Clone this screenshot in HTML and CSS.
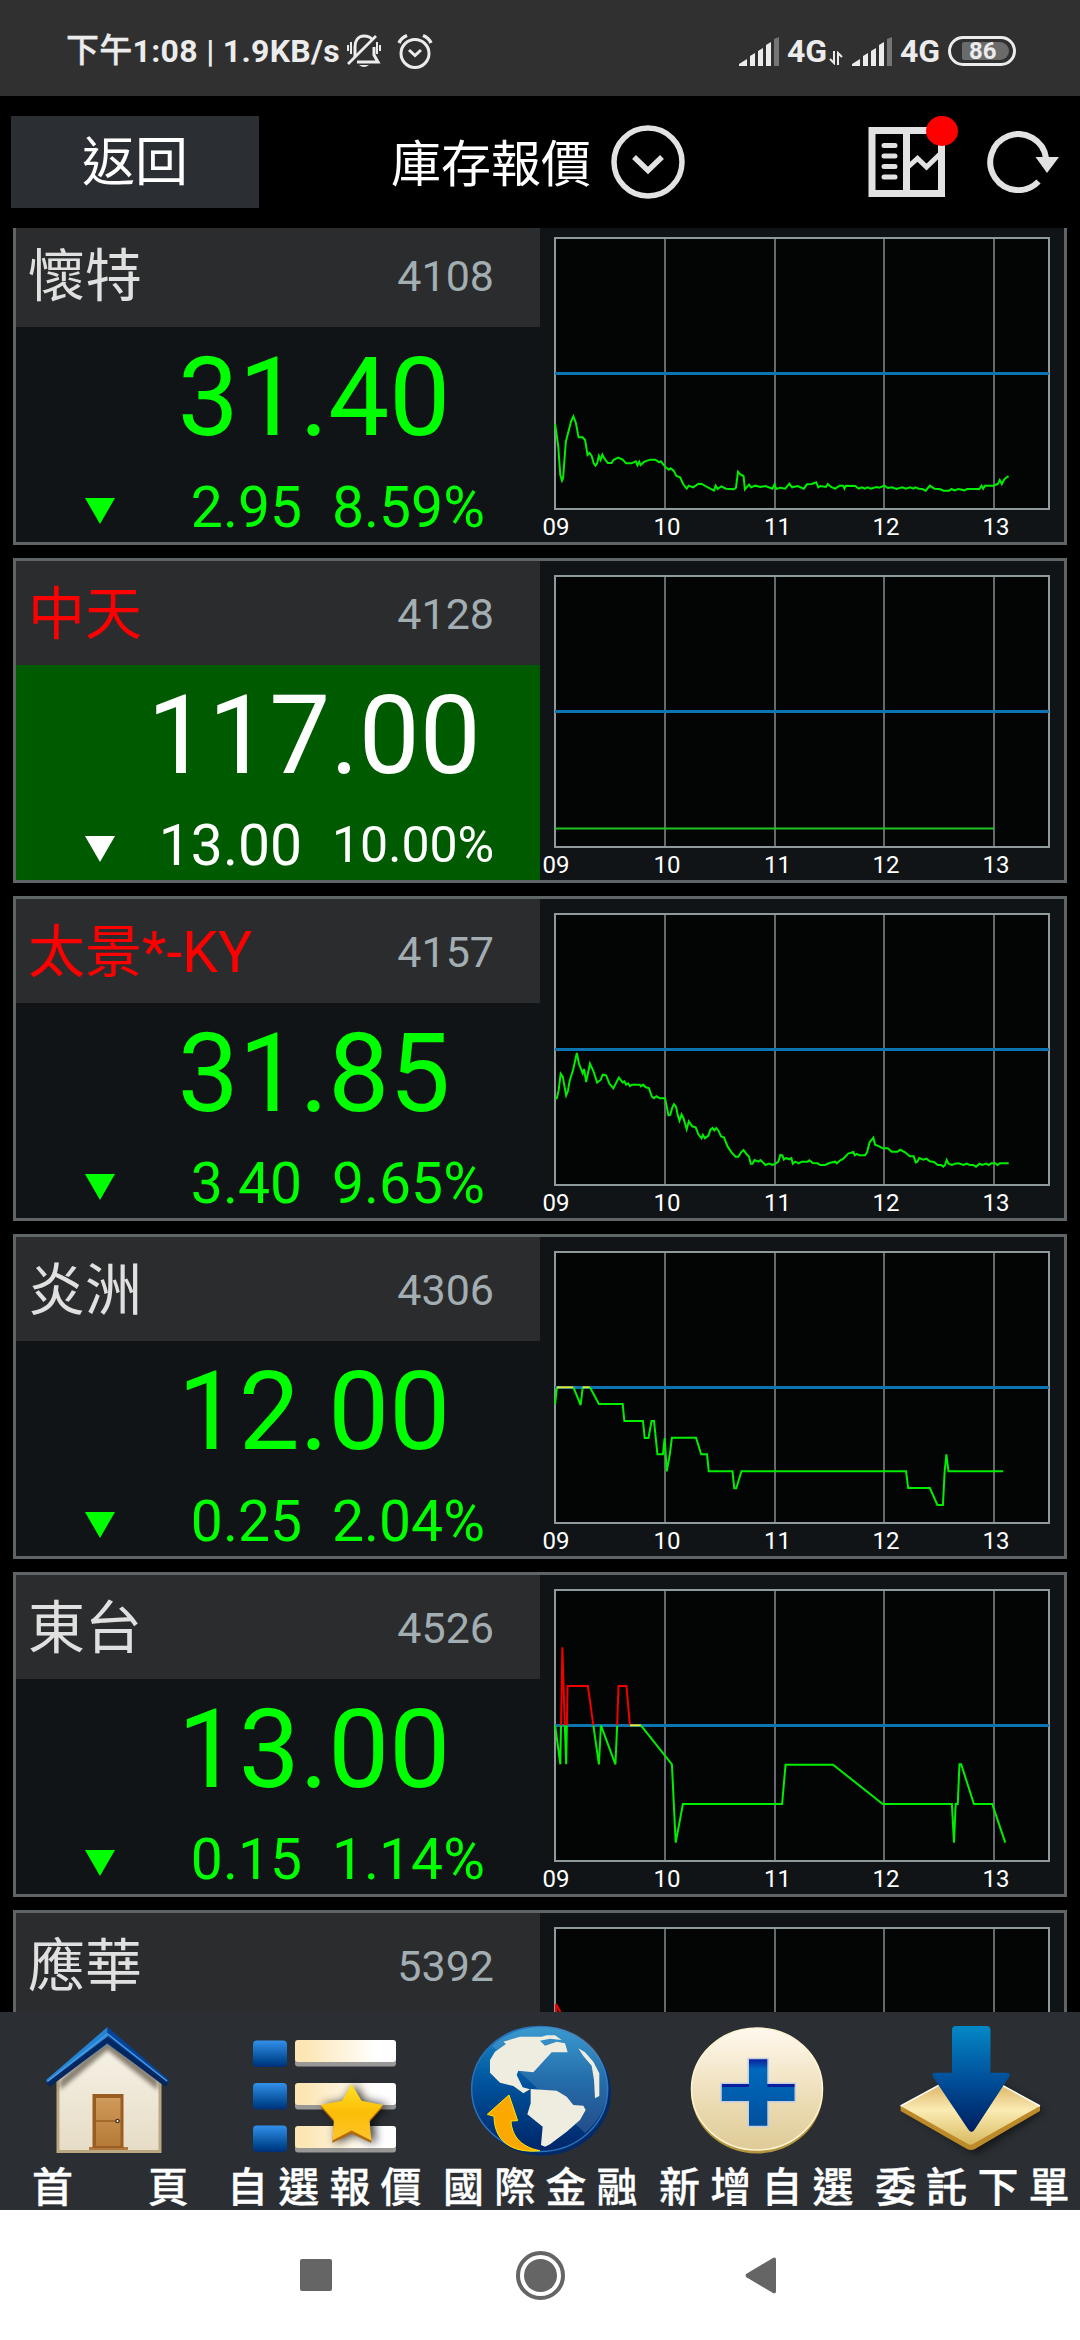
FILE: index.html
```html
<!DOCTYPE html>
<html lang="zh-Hant">
  <head>
    <meta charset="UTF-8" />
    <meta name="viewport" content="width=device-width, initial-scale=1.0" />
    <title>庫存報價</title>
    <link rel="stylesheet" href="styles.css">
  </head>
  <body>
    <!-- shared shapes -->
    <svg class="defs" width="0" height="0">
      <defs>
        <g id="grid">
          <rect x="15" y="15" width="494" height="271" fill="#030504"/>
          <path d="M125 15V286M235 15V286M344 15V286M454 15V286" stroke="#646a6c" stroke-width="2"/>
          <rect x="15" y="15" width="494" height="271" fill="none" stroke="#8f9a9c" stroke-width="2"/>
          <path d="M15 150.5H509" stroke="#0c74b0" stroke-width="3"/>
        </g>
        <g id="hours" class="hours">
          <text x="16" y="312">09</text>
          <text x="127" y="312">10</text>
          <text x="237.500" y="312">11</text>
          <text x="346" y="312">12</text>
          <text x="456" y="312">13</text>
        </g>
        <g id="signal">
          <path d="M0 29V27L8 22V29Z M11 29V19L16 16V29Z M19 29V14L24 11V29Z M27 29V8L32 5V29Z" fill="#ececec"/>
          <path d="M35 29V2L40 0V29Z" fill="#757575"/>
        </g>
        <linearGradient id="blue" x1="0" y1="0" x2="0" y2="1">
          <stop offset="0" stop-color="#3290ea"/>
          <stop offset=".8" stop-color="#00468f"/>
          <stop offset="1" stop-color="#002f78"/>
        </linearGradient>
        <linearGradient id="bar" x1="0" y1="0" x2="1" y2="0">
          <stop offset=".1" stop-color="#fce6b4"/>
          <stop offset=".8" stop-color="#fff"/>
        </linearGradient>
        <linearGradient id="wall" x1="0" y1="0" x2="0" y2="1">
          <stop offset="0" stop-color="#f8f4ea"/>
          <stop offset="1" stop-color="#e6dcc6"/>
        </linearGradient>
        <linearGradient id="door" x1="0" y1="0" x2="0" y2="1">
          <stop offset="0" stop-color="#cf9a5a"/>
          <stop offset="1" stop-color="#b57a38"/>
        </linearGradient>
        <linearGradient id="star" x1="0" y1="0" x2="0" y2="1">
          <stop offset="0" stop-color="#ffe324"/>
          <stop offset=".5" stop-color="#fbbd06"/>
          <stop offset="1" stop-color="#ffc42c"/>
        </linearGradient>
        <linearGradient id="sea" x1="0" y1="0" x2="0" y2="1">
          <stop offset="0" stop-color="#1a8ac6"/>
          <stop offset=".45" stop-color="#00539c"/>
          <stop offset="1" stop-color="#002468"/>
        </linearGradient>
        <linearGradient id="cream" x1="0" y1="0" x2="0" y2="1">
          <stop offset="0" stop-color="#fff9ee"/>
          <stop offset=".6" stop-color="#ecdcb4"/>
          <stop offset="1" stop-color="#decb98"/>
        </linearGradient>
        <linearGradient id="plus" x1="0" y1="0" x2="0" y2="1">
          <stop offset="0" stop-color="#0b1f9c"/>
          <stop offset=".15" stop-color="#0069bd"/>
          <stop offset="1" stop-color="#00509c"/>
        </linearGradient>
        <linearGradient id="arrow" x1="0" y1="0" x2="0" y2="1">
          <stop offset="0" stop-color="#0488c6"/>
          <stop offset=".5" stop-color="#00509a"/>
          <stop offset="1" stop-color="#001f60"/>
        </linearGradient>
        <linearGradient id="plate" x1="0" y1="0" x2="0" y2="1">
          <stop offset=".3" stop-color="#e4c27a"/>
          <stop offset=".55" stop-color="#fbecb4"/>
          <stop offset="1" stop-color="#d8b95f"/>
        </linearGradient>
        <filter id="soft" x="-30%" y="-30%" width="160%" height="160%">
          <feGaussianBlur stdDeviation="5"/>
        </filter>
        <filter id="eaves" x="-30%" y="-30%" width="160%" height="160%">
          <feGaussianBlur stdDeviation="2"/>
        </filter>
      </defs>
    </svg>

    <div class="status">
      <span class="status_text"><span class="ampm">下午</span>1:08 | 1.9KB/s</span>
      <svg class="bell" width="36" height="36" viewBox="0 0 36 36" fill="none" stroke="#ececec" stroke-width="3">
        <path d="M9 24V14C9 8 12 3 18 3Q24 3 26.500 7M28 14V22L32 29H11"/>
        <path d="M2 31L30 3" stroke-width="2.600"/>
        <path d="M2 12V18M5 9V21M31 9V21M34 12V18" stroke-width="2"/>
        <path d="M13 32H23Q18 36 13 32Z" fill="#ececec" stroke="none"/>
      </svg>
      <svg class="alarm" width="36" height="36" viewBox="0 0 36 36" fill="none" stroke="#ececec" stroke-width="3">
        <circle cx="18" cy="20.500" r="14"/>
        <path d="M2 10Q4 5 10 2.500M34 10Q32 5 26 2.500" stroke-width="3.400"/>
        <path d="M12 17L18 22.500L24 17"/>
      </svg>
      <svg class="signal" width="40" height="29" viewBox="0 0 40 29"><use href="#signal"/></svg>
      <span class="net">4G</span>
      <svg class="updown" width="14" height="14" viewBox="0 0 14 14" fill="none" stroke="#ececec" stroke-width="2">
        <path d="M5 0V12L1 8M9 14V2L13 6"/>
      </svg>
      <svg class="signal2" width="40" height="29" viewBox="0 0 40 29"><use href="#signal"/></svg>
      <span class="net">4G</span>
      <div class="battery"><span>86</span></div>
    </div>

    <div class="header">
      <button class="btnBack">返回</button>
      <h1>庫存報價</h1>
      <svg class="more" width="74" height="74" viewBox="0 0 74 74" fill="none" stroke="#e2e2e2">
        <circle cx="37" cy="37" r="34" stroke-width="5.500"/>
        <path d="M23 32L37 45.500L51 32" stroke-width="5.500"/>
      </svg>
      <div class="layout">
        <svg width="78" height="70" viewBox="0 0 78 70" fill="none" stroke="#e2e2e2">
          <path d="M4 3.500H73.500V66.500H4Z" stroke-width="7"/>
          <path d="M38.500 0V70" stroke-width="7"/>
          <path d="M16 18.500H27M16 29H27M16 39.500H27M16 50H27" stroke-width="5" stroke-linecap="round"/>
          <path d="M40 40L49.500 31.500L58.500 40L72 27" stroke-width="5"/>
        </svg>
        <span class="badge"></span>
      </div>
      <svg class="refresh" width="74" height="62" viewBox="0 0 74 62">
        <path d="M52.500 50.500A28 28 0 1 1 60 27" fill="none" stroke="#e2e2e2" stroke-width="6"/>
        <path d="M49.500 26H73L61 42Z" fill="#e2e2e2"/>
      </svg>
    </div>

    <div class="list">
      <div class="card">
        <div class="quote">
          <div class="quote_head"><span class="name">懷特</span><span class="code">4108</span></div>
          <div class="price">31.40</div>
          <div class="change"><i class="down"></i><span class="diff">2.95</span><span class="percent">8.59%</span></div>
        </div>
        <svg class="chart" width="524" height="319" viewBox="0 0 524 319">
          <use href="#grid"/>
          <g transform="translate(0 -3) scale(.34439 .33333)">
            <polyline class="fall" points="44,612 53,680 59,765 64,782 67,775 75,665 90,605 97,589 104,608 112,652 124,652 131,660 138,705 144,699 150,708 156,730 161,737 166,730 171,708 176,720 181,704 187,716 197,729 208,729 213,720 227,713 240,719 250,730 265,730 278,724 283,736 288,725 292,735 303,725 320,719 335,719 346,727 351,724 363,740 374,749 379,745 388,752 396,768 407,772 416,793 426,806 432,797 445,802 460,791 470,792 485,801 505,812 510,797 516,807 526,799 540,806 563,808 569,803 575,755 582,763 591,768 595,808 607,794 613,802 625,797 640,801 655,798 675,806 681,793 686,807 698,803 712,806 724,791 732,802 748,798 766,806 775,793 790,792 802,787 808,802 814,798 830,801 836,792 845,801 857,806 870,797 880,797 884,806 888,797 916,798 925,806 935,802 943,806 951,802 960,806 977,801 985,803 1000,797 1010,804 1022,802 1035,807 1052,802 1062,806 1075,802 1084,806 1090,802 1100,806 1110,807 1120,812 1132,797 1145,806 1160,807 1172,812 1188,812 1195,807 1203,811 1215,807 1232,811 1240,807 1276,807 1282,797 1287,806 1292,797 1318,797 1330,791 1335,780 1341,792 1348,778 1357,770 1361,770"/>
          </g>
          <use href="#hours"/>
        </svg>
      </div>

      <div class="card">
        <div class="quote">
          <div class="quote_head"><span class="name hot">中天</span><span class="code">4128</span></div>
          <div class="limit">
            <div class="price">117.00</div>
            <div class="change"><i class="down"></i><span class="diff">13.00</span><span class="percent small">10.00%</span></div>
          </div>
        </div>
        <svg class="chart" width="524" height="319" viewBox="0 0 524 319">
          <use href="#grid"/>
          <path class="flat" d="M15 267.500H454"/>
          <use href="#hours"/>
        </svg>
      </div>

      <div class="card">
        <div class="quote">
          <div class="quote_head"><span class="name hot">太景*-KY</span><span class="code">4157</span></div>
          <div class="price">31.85</div>
          <div class="change"><i class="down"></i><span class="diff">3.40</span><span class="percent">9.65%</span></div>
        </div>
        <svg class="chart" width="524" height="319" viewBox="0 0 524 319">
          <use href="#grid"/>
          <g transform="translate(0 -9) scale(.34439 .33333)">
            <polyline class="fall" points="44,627 49,624 54,602 60,551 66,560 76,616 81,603 86,573 96,540 107,489 113,521 124,550 128,537 134,576 145,521 155,543 166,578 176,570 182,554 192,556 202,582 213,595 229,563 240,577 245,574 250,584 256,580 261,588 267,584 290,584 293,589 299,584 307,592 316,594 325,620 331,625 338,619 348,625 363,625 368,650 373,676 378,675 384,653 389,643 395,650 400,676 405,692 411,673 417,686 426,718 432,694 442,709 452,712 460,733 469,745 473,735 479,745 489,737 495,719 501,714 506,721 512,714 518,722 526,739 534,742 545,770 556,787 568,800 576,800 584,787 591,780 600,793 607,800 612,821 617,821 623,810 634,815 640,810 655,825 665,821 675,825 685,820 692,815 698,795 704,796 708,809 714,804 724,808 730,804 734,821 741,815 751,820 760,815 777,815 782,811 792,819 806,820 814,825 828,825 840,819 857,815 862,820 872,811 880,807 895,791 910,786 914,796 920,792 927,796 944,796 950,786 957,757 968,743 973,764 985,769 995,775 1010,775 1021,785 1038,785 1046,779 1060,787 1074,799 1085,799 1091,817 1096,815 1101,804 1113,809 1122,806 1132,814 1144,816 1155,825 1165,825 1171,830 1176,825 1181,810 1186,821 1196,825 1205,821 1215,820 1230,825 1239,821 1248,825 1258,825 1266,830 1276,821 1284,825 1295,821 1303,825 1310,820 1322,820 1328,825 1335,820 1361,820"/>
          </g>
          <use href="#hours"/>
        </svg>
      </div>

      <div class="card">
        <div class="quote">
          <div class="quote_head"><span class="name">炎洲</span><span class="code">4306</span></div>
          <div class="price">12.00</div>
          <div class="change"><i class="down"></i><span class="diff">0.25</span><span class="percent">2.04%</span></div>
        </div>
        <svg class="chart" width="524" height="319" viewBox="0 0 524 319">
          <use href="#grid"/>
          <g transform="translate(0 -7) scale(.34439 .33333)">
            <polyline class="fall" points="44,522 49,472"/>
            <polyline class="even" points="49,472 97,472"/>
            <polyline class="fall" points="97,472 118,525 124,472"/>
            <polyline class="even" points="124,472 145,472"/>
            <polyline class="fall" points="145,472 171,522 240,522 245,573 299,573 304,624 315,624 324,573 331,573 341,673 357,673 362,624 368,724 377,673 383,623 453,623 468,673 485,673 490,724 559,724 564,775 570,775 585,724 1063,724 1069,774 1132,774 1154,825 1170,825 1175,724 1180,673 1186,724 1345,724"/>
          </g>
          <use href="#hours"/>
        </svg>
      </div>

      <div class="card">
        <div class="quote">
          <div class="quote_head"><span class="name">東台</span><span class="code">4526</span></div>
          <div class="price">13.00</div>
          <div class="change"><i class="down"></i><span class="diff">0.15</span><span class="percent">1.14%</span></div>
        </div>
        <svg class="chart" width="524" height="319" viewBox="0 0 524 319">
          <use href="#grid"/>
          <g transform="translate(0 -5) scale(.34439 .33333)">
            <polyline class="fall" points="44,466 59,583 61,466"/>
            <polyline class="rise" points="61,466 65,232 72,466"/>
            <polyline class="fall" points="72,466 76,583 78,466"/>
            <polyline class="rise" points="78,466 80,348 139,348 155,466"/>
            <polyline class="fall" points="155,466 171,583 177,466 219,583 224,466"/>
            <polyline class="rise" points="224,466 228,348 251,348 261,466"/>
            <polyline class="even" points="261,466 293,466"/>
            <polyline class="fall" points="293,466 383,583 394,818 415,702 703,702 713,584 851,584 995,702 1196,702 1202,818 1207,702 1213,702 1218,583 1223,583 1260,702 1313,702 1351,818"/>
          </g>
          <use href="#hours"/>
        </svg>
      </div>

      <div class="card">
        <div class="quote">
          <div class="quote_head"><span class="name">應華</span><span class="code">5392</span></div>
        </div>
        <svg class="chart" width="524" height="319" viewBox="0 0 524 319">
          <use href="#grid"/>
          <polyline class="rise" points="16,105 16,91 22,102"/>
        </svg>
      </div>
    </div>

    <div class="tabs">
      <div class="tab">
        <svg width="216" height="150" viewBox="0 0 216 150">
          <path d="M58 66L107.500 24L160 66V139.500H58Z" fill="url(#wall)" stroke="#b9a882" stroke-width="3"/>
          <path d="M60 78L107.500 38L158 78V68L107.500 26L60 68Z" fill="#6b6252" opacity=".8" filter="url(#eaves)"/>
          <path d="M89 138V135H128V138Z" fill="#b0783c"/>
          <path d="M92.500 82H123.500V136H92.500Z" fill="#9a5c20"/>
          <path d="M96 86H120.500V134H96Z" fill="url(#door)"/>
          <path d="M96 109H120.500" stroke="#9a5c20" stroke-width="1.500"/>
          <circle cx="117.500" cy="109" r="2.300" fill="#4b3020"/>
          <circle cx="117.500" cy="109" r="1" fill="#fff"/>
          <path d="M107.500 15L46 68L49 74L107.500 32Z" fill="#2583d3"/>
          <path d="M107.500 15L169 68L166 74L107.500 32Z" fill="#06439a"/>
          <path d="M48 73L107.500 28L167 73" fill="none" stroke="#04275f" stroke-width="5"/>
          <path d="M48 69L107.500 22L167 69" fill="none" stroke="#4a9be0" stroke-width="1.500"/>
        </svg>
        <div class="tab_text home"><span>首</span><span>頁</span></div>
      </div>
      <div class="tab">
        <svg width="216" height="150" viewBox="0 0 216 150">
          <rect x="37" y="28.500" width="34" height="26.500" rx="4" fill="url(#blue)"/>
          <rect x="37" y="71" width="34" height="26.500" rx="4" fill="url(#blue)"/>
          <rect x="37" y="113.500" width="34" height="26.500" rx="4" fill="url(#blue)"/>
          <g fill="#9a9896">
            <rect x="79" y="30" width="101" height="24.500" rx="3"/>
            <rect x="79" y="73" width="101" height="24.500" rx="3"/>
            <rect x="79" y="116" width="101" height="24.500" rx="3"/>
          </g>
          <g fill="url(#bar)">
            <rect x="79" y="28" width="101" height="22" rx="3"/>
            <rect x="79" y="71" width="101" height="22" rx="3"/>
            <rect x="79" y="114" width="101" height="22" rx="3"/>
          </g>
          <path d="M139 72L149 89L172 93L158 108L160 132L139 122L119 132L121 108L106 93L129 89Z" fill="#000" opacity=".75" filter="url(#soft)"/>
          <path d="M135.600 74L145.600 91L167 95L153.500 110L155.300 131L135.600 121.500L116.300 131L118 110L104.600 95L126 91Z" fill="#b26a0c"/>
          <path d="M135.600 72L145.600 88.700L167 93L153.500 108L155.300 128.500L135.600 118.500L116.300 128.500L118 108L104.600 93L126 88.700Z" fill="url(#star)"/>
        </svg>
        <div class="tab_text">自選報價</div>
      </div>
      <div class="tab">
        <svg width="216" height="150" viewBox="0 0 216 150">
          <ellipse cx="110.500" cy="80.500" rx="68.500" ry="63" fill="#022a69"/>
          <ellipse cx="107.700" cy="77" rx="68" ry="62.500" fill="url(#sea)" stroke="#2a72bb" stroke-width="1.500"/>
          <path d="M60 34C90 6 145 8 166 43C183 74 176 101 153 121Z" fill="#fff" opacity=".14"/>
          <g transform="translate(18 8) scale(.33333)">
            <g fill="#eeede0">
              <path d="M160 65L210 50H275L290 46H315L335 60L300 56L270 62L285 77L320 65L345 70L353 97L335 97H305L250 157L205 152L200 165L218 202L240 208L220 220L190 198L150 188L120 158V120L135 95L168 72Z"/>
              <path d="M242 207L320 212L350 230L370 255L400 257L407 270L390 300L350 335L300 373L285 380L273 375L278 320L232 283L242 250Z"/>
              <path d="M385 85L405 97L430 125L448 160V228L435 235L432 180L425 137L400 108Z"/>
            </g>
            <path d="M177 225L203 302L183 303C185 340 205 380 270 392C200 400 133 375 132 289L112 283Z" fill="#fba900" stroke="#ffe600" stroke-width="3"/>
          </g>
        </svg>
        <div class="tab_text">國際金融</div>
      </div>
      <div class="tab">
        <svg width="216" height="150" viewBox="0 0 216 150">
          <ellipse cx="109" cy="79.500" rx="66" ry="62" fill="#b4963f"/>
          <ellipse cx="109" cy="77" rx="65.500" ry="61" fill="url(#cream)" stroke="#fff4d2" stroke-width="1.500"/>
          <path d="M101 47.300H119.300V72H146.500V89H119.300V113.700H101V89H73.800V72H101Z" fill="url(#plus)" stroke="#c5cde0" stroke-width="3" paint-order="stroke"/>
          <path d="M74 73.500H101M119.500 73.500H146.500" stroke="#0b1f9c" stroke-width="3"/>
        </svg>
        <div class="tab_text">新增自選</div>
      </div>
      <div class="tab">
        <svg width="216" height="150" viewBox="0 0 216 150">
          <path d="M42 98L110 60L180 98L112 142Z" fill="#000" opacity=".6" filter="url(#soft)"/>
          <path d="M36.600 94V99L103 137Q107 139 111 137L176 99V94Z" fill="#bd8a2a"/>
          <path d="M36.600 94L106.500 56L176 94L109 132Q106.500 133.500 104 132Z" fill="url(#plate)"/>
          <path d="M36.600 94L106.500 56L176 94" fill="none" stroke="#fffdf4" stroke-width="1.500"/>
          <path d="M88 18Q88 14 92 14H122.500Q126.500 14 126.500 18V60.700H143Q147 61 145 65L111 117Q107.500 123 104 117L69 65Q67 61 71 60.700H88Z" fill="url(#arrow)"/>
        </svg>
        <div class="tab_text">委託下單</div>
      </div>
    </div>

    <div class="sysnav">
      <span class="recent"></span>
      <span class="home_key"></span>
      <svg width="32" height="37" viewBox="0 0 32 37"><path d="M1.500 16.800L28 1Q31 -.5 31 3V34Q31 37.500 28 36L1.500 20.200Q-.5 18.500 1.500 16.800Z" fill="#656565"/></svg>
    </div>
  </body>
</html>
```

FILE: styles.css
```css
*{
    margin: 0;
    padding: 0;
    box-sizing: border-box;
}
body{
    width: 1080px;
    height: 2340px;
    overflow: hidden;
    background-color: #000;
    font-family: Roboto, "Noto Sans CJK TC", sans-serif;
    display: flex;
    flex-direction: column;
}
svg{
    display: block;
    flex-shrink: 0;
}
.defs{
    position: absolute;
}

/* status bar */
.status{
    height: 96px;
    padding: 6px 64px 0 66px;
    display: flex;
    align-items: center;
    background-color: #303030;
    color: #ececec;
    font-size: 32px;
    font-weight: 700;
}
.status_text{
    width: 280px;
    white-space: nowrap;
    line-height: 40px;
    letter-spacing: .3px;
}
.ampm{
    font-size: 33px;
    font-weight: 500;
    -webkit-text-stroke: .3px #ececec;
}
.alarm{
    margin-left: 15px;
    margin-right: auto;
}
.net{
    width: 41px;
    margin-left: 8px;
    line-height: 40px;
}
.updown{
    margin: 14px 0 0 1px;
}
.signal2{
    margin-left: 9px;
}
.battery{
    width: 68px;
    height: 30px;
    margin-left: 7px;
    padding: 3px 4px 3px 11px;
    border: 3px solid #ececec;
    border-radius: 15px;
    display: flex;
}
.battery span{
    flex: 1;
    background-color: #6b6b6b;
    border-radius: 2px 9px 9px 2px;
    font-size: 24px;
    line-height: 19px;
    padding-left: 7px;
}

/* header */
.header{
    height: 132px;
    padding: 0 20px 0 11px;
    display: flex;
    align-items: center;
}
.btnBack{
    width: 248px;
    height: 92px;
    padding-top: 2px;
    border: none;
    background-color: #2b2f33;
    color: #fff;
    font-family: inherit;
    font-size: 53px;
    line-height: 90px;
}
h1{
    margin-left: 132px;
    padding-top: 5px;
    color: #fff;
    font-size: 50px;
    font-weight: 400;
    line-height: 70px;
}
.more{
    margin-left: 20px;
}
.layout{
    position: relative;
    margin-left: auto;
}
.badge{
    position: absolute;
    top: -11px;
    right: -12px;
    width: 32px;
    height: 30px;
    border-radius: 50%;
    background-color: #f00;
}
.refresh{
    margin-left: 40px;
}

/* stock list */
.list{
    height: 1784px;
    padding: 0 13px;
    overflow: hidden;
}
.card{
    height: 325px;
    margin-bottom: 13px;
    border: 3px solid #5f6467;
    background-color: #101416;
    display: flex;
}
.card:first-child{
    margin-top: -8px;
}
.quote{
    width: 524px;
    color: #0f0;
}
.quote_head{
    height: 104px;
    padding: 3px 46px 0 12px;
    display: flex;
    align-items: center;
    justify-content: space-between;
    background-color: #2b2c2e;
}
.name{
    color: #e0e0e0;
    font-size: 57px;
    line-height: 80px;
}
.name.hot{
    color: #f00;
}
.code{
    padding-bottom: 2px;
    color: #a3aeb2;
    font-size: 43px;
    line-height: 60px;
}
.limit{
    height: 215px;
    background-color: #005a00;
    color: #fff;
}
.price{
    padding-left: 72px;
    font-size: 108.5px;
    line-height: 142px;
    text-align: center;
}
.change{
    height: 73px;
    padding-left: 69px;
    display: grid;
    grid-template-columns: 30px 187px 1fr;
    font-size: 57px;
    line-height: 77px;
}
.down{
    height: 26px;
    margin-top: 29px;
    background-color: currentColor;
    clip-path: polygon(0 0, 100% 0, 50% 100%);
}
.diff{
    text-align: right;
}
.percent{
    padding-left: 30px;
}
.percent.small{
    font-size: 50px;
}
.hours{
    fill: #fff;
    font-size: 24px;
    text-anchor: middle;
}
.fall, .rise, .even, .flat{
    fill: none;
    stroke-width: 2;
    vector-effect: non-scaling-stroke;
}
.fall{
    stroke: #00ee00;
}
.rise{
    stroke: #f00000;
}
.even{
    stroke: #e6e628;
}
.flat{
    stroke: #1fc41f;
}

/* bottom tabs */
.tabs{
    height: 198px;
    display: grid;
    grid-template-columns: repeat(5, 216px);
    background-color: #2b2f33;
}
.tab_text{
    color: #fff;
    font-family: "Noto Sans CJK TC", sans-serif;
    font-size: 41px;
    font-weight: 500;
    -webkit-text-stroke: .3px #fff;
    line-height: 44px;
    height: 48px;
    letter-spacing: 10.2px;
    padding-left: 11px;
    white-space: nowrap;
}
.tab_text.home{
    padding: 0 17px 0 32px;
    display: flex;
    justify-content: space-between;
}

/* system keys */
.sysnav{
    height: 130px;
    padding-left: 300px;
    display: flex;
    align-items: center;
    background-color: #fff;
}
.recent{
    width: 32px;
    height: 32px;
    border-radius: 2px;
    background-color: #656565;
}
.home_key{
    width: 49px;
    height: 49px;
    margin: 0 180px 0 184px;
    border: 4px solid #656565;
    border-radius: 50%;
    padding: 4px;
    background-color: #656565;
    background-clip: content-box;
}
```
